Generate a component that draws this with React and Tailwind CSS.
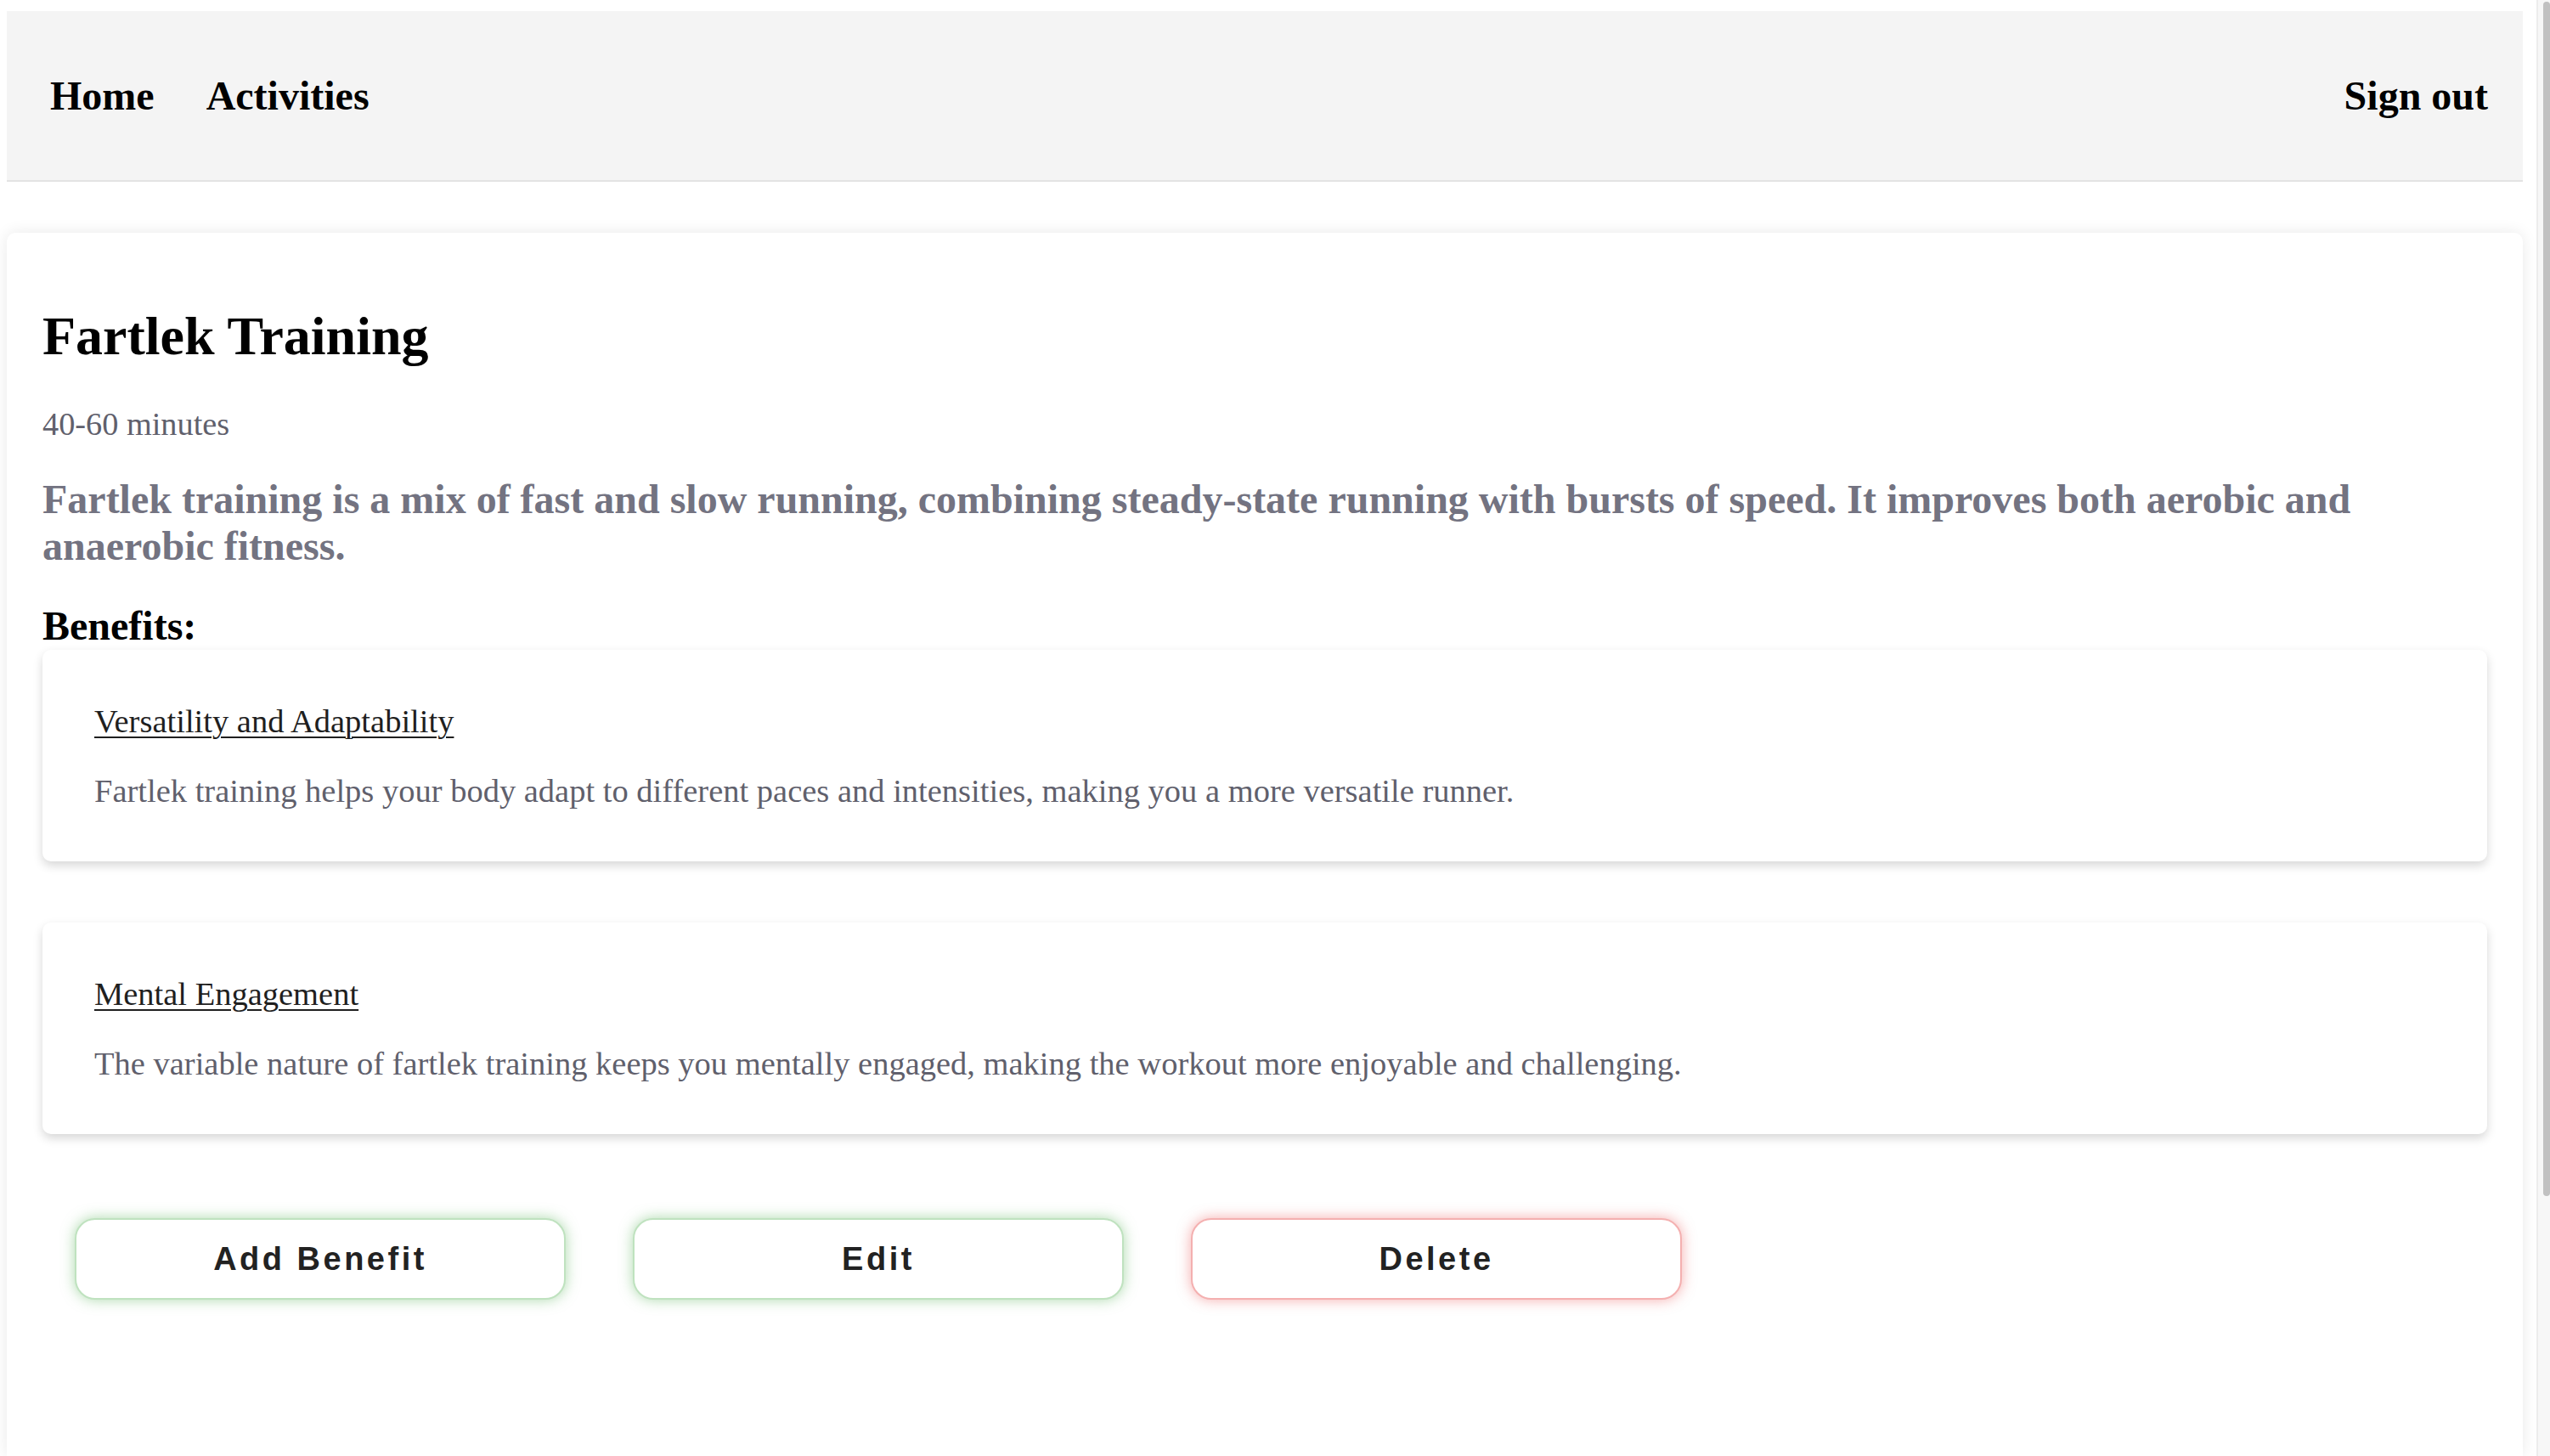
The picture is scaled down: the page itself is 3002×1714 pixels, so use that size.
import React from "react";

const serif = { fontFamily: '"Liberation Serif", "Times New Roman", serif' };
const sans = { fontFamily: '"Liberation Sans", Arial, sans-serif' };

function BenefitCard({ title, text, className = "" }) {
  return (
    <div
      className={`h-[249px] rounded-[10px] bg-white px-[61px] pt-[62px] shadow-[0_5px_12px_rgba(0,0,0,0.16)] ${className}`}
    >
      <h3 className="text-[38.5px] leading-[44px] font-normal text-[#1f1f1f] underline decoration-[2px] underline-offset-[5px]">
        {title}
      </h3>
      <p className="mt-[38px] text-[38.5px] leading-[44px] text-[#60606c]">{text}</p>
    </div>
  );
}

function ActionButton({ children, tone }) {
  const toneCls =
    tone === "red"
      ? "border-[#f4b0b0] shadow-[0_0_16px_rgba(235,90,90,0.5)]"
      : "border-[#bfe2bf] shadow-[0_0_16px_rgba(90,180,90,0.5)]";
  return (
    <button
      className={`flex h-[96px] w-[578px] items-center justify-center rounded-[24px] border-2 bg-white text-[38px] font-bold tracking-[3.5px] text-[#222222] ${toneCls}`}
      style={sans}
    >
      {children}
    </button>
  );
}

export default function App() {
  return (
    <div className="flex h-[1714px] w-full overflow-hidden bg-white text-black" style={serif}>
      <div className="flex min-w-0 flex-1 flex-col pl-[8px] pr-[16px] pt-[13px]">
        <nav className="flex h-[201px] shrink-0 items-center justify-between border-b-2 border-[#e3e3e3] bg-[#f4f4f4] pl-[51px] pr-[41px]">
          <div className="flex items-center gap-[61px] text-[48px] font-bold">
            <span>Home</span>
            <span>Activities</span>
          </div>
          <span className="text-[48px] font-bold">Sign out</span>
        </nav>

        <main className="mt-[60px] flex-1 rounded-t-[10px] bg-white px-[42px] pt-[85px] shadow-[0_0_18px_rgba(0,0,0,0.09)]">
          <h1 className="text-[64px] leading-[74px] font-bold">Fartlek Training</h1>
          <p className="mt-[44px] text-[38.3px] leading-[44px] text-[#60606c]">40-60 minutes</p>
          <p className="mt-[39px] text-[48px] leading-[55.2px] font-bold text-[#737381]">
            Fartlek training is a mix of fast and slow running, combining steady-state running with bursts of speed. It
            improves both aerobic and anaerobic fitness.
          </p>
          <h2 className="mt-[39px] text-[48px] leading-[55px] font-bold">Benefits:</h2>

          <BenefitCard
            className="mt-[1px]"
            title="Versatility and Adaptability"
            text="Fartlek training helps your body adapt to different paces and intensities, making you a more versatile runner."
          />
          <BenefitCard
            className="mt-[72px]"
            title="Mental Engagement"
            text="The variable nature of fartlek training keeps you mentally engaged, making the workout more enjoyable and challenging."
          />

          <div className="mt-[99px] flex gap-[79px] pl-[38px]">
            <ActionButton tone="green">Add Benefit</ActionButton>
            <ActionButton tone="green">Edit</ActionButton>
            <ActionButton tone="red">Delete</ActionButton>
          </div>
        </main>
      </div>

      <div className="flex h-full w-[16px] shrink-0 border-l-2 border-[#ececec] bg-[#f7f7f7] pl-[6px] pt-[2px]">
        <div className="h-[1406px] w-full rounded-t-[6px] rounded-b-[6px] bg-[#c1c1c1]" />
      </div>
    </div>
  );
}
